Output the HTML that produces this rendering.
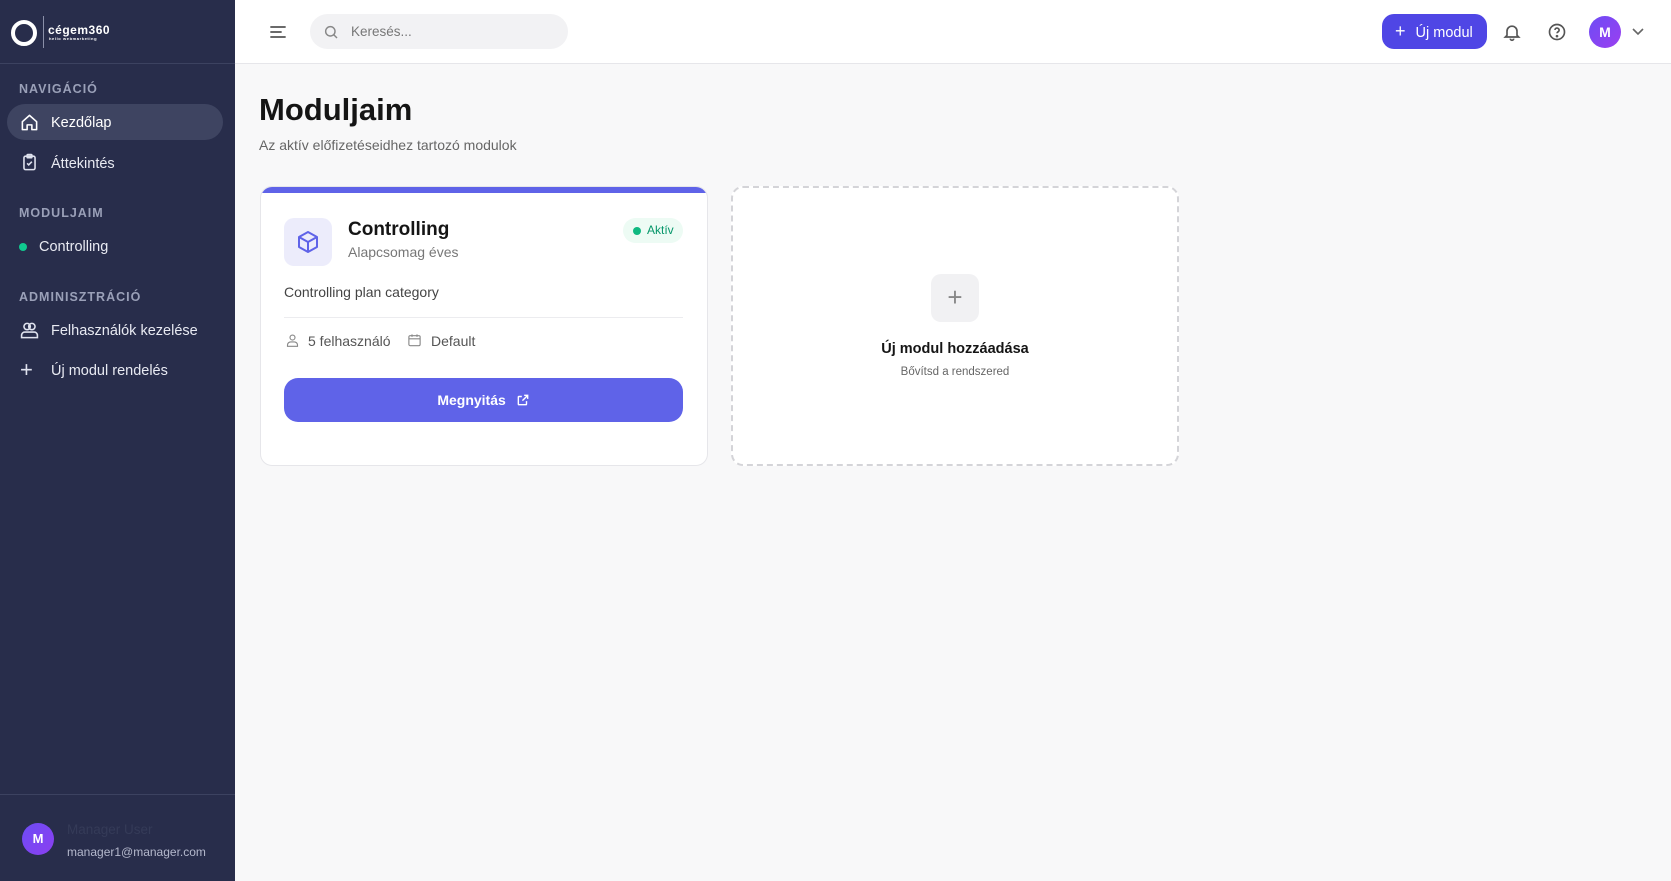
<!DOCTYPE html>
<html><head><meta charset="utf-8"><style>
*{box-sizing:border-box;margin:0;padding:0}
body{width:1671px;height:881px;overflow:hidden;font-family:"Liberation Sans",sans-serif;background:#f8f8f9;position:relative}
.sb{position:absolute;left:0;top:0;width:235px;height:881px;background:#282d4b;color:#e5e7f0}
.abs{position:absolute}
.sec{position:absolute;left:19px;font-size:12.5px;font-weight:bold;letter-spacing:1px;color:#9aa0b8}
.item{position:absolute;left:51px;font-size:14.5px;color:#e8eaf2}
.hdr{position:absolute;left:235px;top:0;right:0;height:64px;background:#fff;border-bottom:1px solid #e6e6ea}
.card{position:absolute;top:186px;width:448px;height:280px;background:#fff;border-radius:12px}
</style></head><body>
<div class="sb">
  <div class="abs" style="left:11px;top:20px;width:26px;height:26px;border:4px solid #fff;border-radius:50%"></div>
  <div class="abs" style="left:43px;top:16px;width:1px;height:32px;background:#8a8fa8"></div>
  <div class="abs" style="left:48px;top:23px;font-size:12px;font-weight:bold;color:#fff;letter-spacing:.5px">cégem360</div>
  <div class="abs" style="left:49px;top:36px;font-size:4px;font-weight:bold;color:#fff;letter-spacing:.6px">hello webmarketing</div>
  <div class="abs" style="left:0;top:63px;width:235px;height:1px;background:#3c4260"></div>
  <div class="sec" style="top:82px">NAVIGÁCIÓ</div>
  <div class="abs" style="left:7px;top:104px;width:216px;height:36px;border-radius:18px;background:#3e4461"></div>
  <svg class="abs" style="left:20px;top:113px" width="19" height="19" viewBox="0 0 24 24" fill="none" stroke="#fff" stroke-width="2" stroke-linejoin="round"><path d="M3 11l9-8 9 8v10H15v-6H9v6H3z"/></svg>
  <div class="item" style="top:115px;color:#fff">Kezdőlap</div>
  <svg class="abs" style="left:20px;top:153px" width="19" height="19" viewBox="0 0 24 24" fill="none" stroke="#dfe2ee" stroke-width="2"><rect x="5" y="4" width="14" height="17" rx="2"/><rect x="9" y="2" width="6" height="4" rx="1"/><path d="M9 13l2 2 4-4"/></svg>
  <div class="item" style="top:156px">Áttekintés</div>
  <div class="sec" style="top:206px">MODULJAIM</div>
  <div class="abs" style="left:19px;top:243px;width:8px;height:8px;border-radius:50%;background:#10c98f"></div>
  <div class="item" style="top:239px;left:39px">Controlling</div>
  <div class="sec" style="top:290px">ADMINISZTRÁCIÓ</div>
  <svg class="abs" style="left:20px;top:321px" width="19" height="19" viewBox="0 0 24 24" fill="none" stroke="#dfe2ee" stroke-width="2"><circle cx="9" cy="7" r="4"/><circle cx="15" cy="7" r="4"/><path d="M2 21v-3a4 4 0 014-4h12a4 4 0 014 4v3z"/></svg>
  <div class="item" style="top:323px">Felhasználók kezelése</div>
  <div class="abs" style="left:20px;top:359px;font-size:22px;color:#dfe2ee;line-height:22px">+</div>
  <div class="item" style="top:363px">Új modul rendelés</div>
  <div class="abs" style="left:0;top:794px;width:235px;height:1px;background:#3c4260"></div>
  <div class="abs" style="left:22px;top:823px;width:32px;height:32px;border-radius:50%;background:linear-gradient(135deg,#6d4cf5,#8b3ff0);color:#fff;font-size:13px;font-weight:bold;text-align:center;line-height:32px">M</div>
  <div class="abs" style="left:67px;top:822px;font-size:13.5px;color:#353b58">Manager User</div>
  <div class="abs" style="left:67px;top:845px;font-size:12px;color:#b4b8cc">manager1@manager.com</div>
</div>
<div class="hdr">
  <svg class="abs" style="left:33px;top:23px" width="20" height="18" viewBox="0 0 20 18" stroke="#555" stroke-width="1.8" stroke-linecap="round"><path d="M3 4h14M3 9h10M3 14h14"/></svg>
  <div class="abs" style="left:75px;top:14px;width:258px;height:35px;border-radius:18px;background:#f2f2f4"></div>
  <svg class="abs" style="left:88px;top:24px" width="16" height="16" viewBox="0 0 24 24" fill="none" stroke="#888" stroke-width="2.2"><circle cx="11" cy="11" r="7"/><path d="M16 16l5 5"/></svg>
  <div class="abs" style="left:116px;top:24px;font-size:13.5px;color:#777">Keresés...</div>
  <div class="abs" style="left:1147px;top:14px;width:105px;height:35px;border-radius:12px;background:#4f46e5;color:#fff;font-size:14.5px;line-height:35px;padding-left:13px"><span style="font-size:18px;margin-right:10px">+</span>Új modul</div>
  <svg class="abs" style="left:1267px;top:22px" width="20" height="20" viewBox="0 0 24 24" fill="none" stroke="#555" stroke-width="2"><path d="M6 16V11a6 6 0 0112 0v5l2 2H4z"/><path d="M10 20a2 2 0 004 0"/></svg>
  <svg class="abs" style="left:1312px;top:22px" width="20" height="20" viewBox="0 0 24 24" fill="none" stroke="#555" stroke-width="2"><circle cx="12" cy="12" r="9"/><path d="M9.5 9.5a2.5 2.5 0 115 .5c0 1.5-2.5 2-2.5 3.5"/><circle cx="12" cy="17" r=".6" fill="#555"/></svg>
  <div class="abs" style="left:1354px;top:16px;width:32px;height:32px;border-radius:50%;background:linear-gradient(135deg,#6d4cf5,#9b3ff0);color:#fff;font-size:14px;font-weight:bold;text-align:center;line-height:32px">M</div>
  <svg class="abs" style="left:1396px;top:27px" width="14" height="10" viewBox="0 0 14 10" fill="none" stroke="#666" stroke-width="1.6"><path d="M2 2l5 5 5-5"/></svg>
</div>
<div class="abs" style="left:259px;top:92px;font-size:31px;font-weight:bold;color:#151515">Moduljaim</div>
<div class="abs" style="left:259px;top:137px;font-size:14px;color:#666">Az aktív előfizetéseidhez tartozó modulok</div>
<div class="card" style="left:260px;border:1px solid #e6e6ea;overflow:hidden">
  <div class="abs" style="left:0;top:0;width:100%;height:6px;background:#5f63e8"></div>
  <div class="abs" style="left:23px;top:31px;width:48px;height:48px;border-radius:10px;background:#ececfb"></div>
  <svg class="abs" style="left:35px;top:43px" width="24" height="24" viewBox="0 0 24 24" fill="none" stroke="#5f63e8" stroke-width="2" stroke-linejoin="round"><path d="M12 2l9 5v10l-9 5-9-5V7z"/><path d="M3 7l9 5 9-5M12 12v10"/></svg>
  <div class="abs" style="left:87px;top:32px;font-size:19px;font-weight:bold;color:#151515">Controlling</div>
  <div class="abs" style="left:87px;top:57px;font-size:14px;color:#777">Alapcsomag éves</div>
  <div class="abs" style="left:362px;top:31px;width:60px;height:25px;border-radius:13px;background:#edfbf4"></div>
  <div class="abs" style="left:372px;top:40px;width:8px;height:8px;border-radius:50%;background:#10b981"></div>
  <div class="abs" style="left:386px;top:36px;font-size:12px;color:#059669">Aktív</div>
  <div class="abs" style="left:23px;top:97px;font-size:14px;color:#444">Controlling plan category</div>
  <div class="abs" style="left:23px;top:130px;width:399px;height:1px;background:#ececef"></div>
  <svg class="abs" style="left:24px;top:145px" width="15" height="16" viewBox="0 0 24 24" fill="none" stroke="#888" stroke-width="1.8"><circle cx="12" cy="8" r="4"/><path d="M4 22v-2a5 5 0 015-5h6a5 5 0 015 5v2z"/></svg>
  <div class="abs" style="left:47px;top:146px;font-size:14px;color:#555">5 felhasználó</div>
  <svg class="abs" style="left:146px;top:145px" width="15" height="16" viewBox="0 0 24 24" fill="none" stroke="#888" stroke-width="1.8"><rect x="3" y="5" width="18" height="16" rx="2"/><path d="M3 10h18M8 3v4M16 3v4"/></svg>
  <div class="abs" style="left:170px;top:146px;font-size:14px;color:#555">Default</div>
  <div class="abs" style="left:23px;top:191px;width:399px;height:44px;border-radius:14px;background:#5f63e8;color:#fff;font-size:14px;font-weight:bold;text-align:center;line-height:44px">Megnyitás <svg style="vertical-align:-2px;margin-left:6px" width="14" height="14" viewBox="0 0 24 24" fill="none" stroke="#fff" stroke-width="2.4"><path d="M14 4h6v6M20 4l-9 9M18 14v5a1 1 0 01-1 1H5a1 1 0 01-1-1V7a1 1 0 011-1h5"/></svg></div>
</div>
<div class="card" style="left:731px;border:2px dashed #d4d4d8;background:#fff">
  <div class="abs" style="left:198px;top:86px;width:48px;height:48px;border-radius:10px;background:#f1f1f3;color:#888;font-size:26px;text-align:center;line-height:46px">+</div>
  <div class="abs" style="left:0;width:100%;top:153px;text-align:center;font-size:14.5px;font-weight:bold;color:#151515">Új modul hozzáadása</div>
  <div class="abs" style="left:0;width:100%;top:178px;text-align:center;font-size:11.5px;color:#666">Bővítsd a rendszered</div>
</div>
</body></html>
